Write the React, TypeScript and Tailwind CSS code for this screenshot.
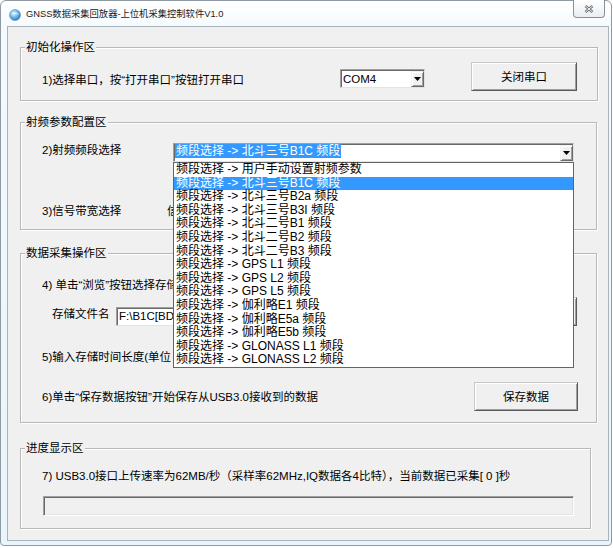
import React from "react";

const items = [
  "频段选择 -> 用户手动设置射频参数",
  "频段选择 -> 北斗三号B1C 频段",
  "频段选择 -> 北斗三号B2a 频段",
  "频段选择 -> 北斗三号B3I 频段",
  "频段选择 -> 北斗二号B1 频段",
  "频段选择 -> 北斗二号B2 频段",
  "频段选择 -> 北斗二号B3 频段",
  "频段选择 -> GPS L1 频段",
  "频段选择 -> GPS L2 频段",
  "频段选择 -> GPS L5 频段",
  "频段选择 -> 伽利略E1 频段",
  "频段选择 -> 伽利略E5a 频段",
  "频段选择 -> 伽利略E5b 频段",
  "频段选择 -> GLONASS L1 频段",
  "频段选择 -> GLONASS L2 频段",
];

function Arrow() {
  return (
    <svg width="7" height="4" viewBox="0 0 7 4">
      <path d="M0 0 H7 L3.5 4 Z" fill="#000" />
    </svg>
  );
}

function DropBtn() {
  return (
    <div className="w-[13px] h-full flex items-center justify-center bg-[#f0f0f0] border-t border-l border-t-[#f0f0f0] border-l-[#f0f0f0] border-r border-b border-r-[#6a6a6a] border-b-[#6a6a6a] shadow-[inset_1px_1px_0_#ffffff,inset_-1px_-1px_0_#a0a0a0]">
      <Arrow />
    </div>
  );
}

function Btn({ label, className }: { label?: string; className: string }) {
  return (
    <div
      className={
        "flex items-center justify-center bg-[#f0f0f0] border-t border-l border-t-[#c8c8c8] border-l-[#c8c8c8] border-r border-b border-r-[#5a5a5a] border-b-[#5a5a5a] shadow-[inset_1px_1px_0_#ffffff,inset_-1px_-1px_0_#a0a0a0] text-[11.5px] leading-[16px] " +
        className
      }
    >
      {label}
    </div>
  );
}

function Group({
  title,
  className,
  children,
}: {
  title: string;
  className: string;
  children: React.ReactNode;
}) {
  return (
    <div
      className={
        "relative ml-[12px] border border-[#b8b8b8] shadow-[inset_1px_1px_0_#ffffff,1px_1px_0_#ffffff] " +
        className
      }
    >
      <div className="absolute left-[4px] top-[-9px] px-[1px] bg-[#f0f0f0] text-[11.5px] leading-[16px]">
        {title}
      </div>
      {children}
    </div>
  );
}

const sunken =
  "border-t border-l border-t-[#a0a0a0] border-l-[#a0a0a0] border-b border-r border-b-[#e3e3e3] border-r-[#e3e3e3] shadow-[inset_1px_1px_0_#696969]";

export default function App() {
  return (
    <div className="w-[613px] h-[548px] bg-white overflow-hidden text-black text-[12px] leading-[16px] font-['Liberation_Sans','Noto_Sans_CJK_SC',sans-serif]">
      <div className="w-[612px] h-[546px] rounded-t-[6px] rounded-b-[4px] border border-[#8e99a3] bg-[linear-gradient(180deg,#ffffff_0%,#f4fafd_5%,#e8f5fa_100%)] flex flex-col">
        {/* title bar */}
        <div className="h-[25px] flex items-start">
          <div className="ml-[8px] mt-[8px] w-[12px] h-[12px]">
            <svg width="12" height="12" viewBox="0 0 12 12">
              <defs>
                <radialGradient id="g" cx="0.4" cy="0.35" r="0.7">
                  <stop offset="0" stopColor="#e8f6ff" />
                  <stop offset="0.45" stopColor="#7cc0ea" />
                  <stop offset="1" stopColor="#2a6fb8" />
                </radialGradient>
              </defs>
              <circle cx="6" cy="6" r="5.5" fill="url(#g)" stroke="#5a8fc4" strokeWidth="0.6" />
              <path d="M2.5 5 Q6 3.5 9.5 5" stroke="#ffffff" strokeWidth="0.8" fill="none" opacity="0.8" />
            </svg>
          </div>
          <div className="ml-[5px] mt-[6px] text-[9.3px] leading-[14px] text-[#1a1a1a] whitespace-nowrap">
            GNSS数据采集回放器-上位机采集控制软件V1.0
          </div>
          <div className="flex-1" />
          <div className="mt-[-1px] mr-[6px] w-[32px] h-[18px] rounded-b-[4px] border border-t-0 border-[#8a9098] bg-[linear-gradient(180deg,#ffffff,#e9eef2)] flex items-center justify-center">
            <svg width="10" height="8" viewBox="0 0 10 8">
              <path d="M1.5 1 L8.5 7 M8.5 1 L1.5 7" stroke="#6a6f75" strokeWidth="2.6" />
              <path d="M1.5 1 L8.5 7 M8.5 1 L1.5 7" stroke="#f4f4f4" strokeWidth="1" />
            </svg>
          </div>
        </div>

        {/* client */}
        <div className="ml-[6px] mr-[2px] mb-[4px] flex-1 bg-[#f0f0f0] border border-[#a9b3bc] flex flex-col">
          {/* G1 */}
          <Group title="初始化操作区" className="mt-[20px] w-[578px] h-[54px]">
            <div className="flex items-start pl-[21px]">
              <div className="w-[298px] mt-[24px] text-[11.5px] leading-[16px] whitespace-nowrap">
                1)选择串口，按“打开串口”按钮打开串口
              </div>
              <div className={"mt-[21px] w-[85px] h-[19px] bg-white flex items-stretch " + sunken}>
                <div className="flex-1 pl-[2px] pt-[1px] text-[11.5px] leading-[16px]">COM4</div>
                <div className="pt-[1px]">
                  <DropBtn />
                </div>
              </div>
              <Btn label="关闭串口" className="ml-[46px] mt-[14px] w-[106px] h-[29px]" />
            </div>
          </Group>

          {/* G2 */}
          <Group title="射频参数配置区" className="mt-[21px] w-[577px] h-[108px]">
            <div className="flex items-start pl-[21px]">
              <div className="w-[131px] mt-[19px] text-[11.5px] leading-[16px] whitespace-nowrap">
                2)射频频段选择
              </div>
              <div className={"relative mt-[20px] w-[401px] h-[19px] bg-white flex items-stretch " + sunken}>
                <div className="flex-1 flex items-start pl-[1px]">
                  <span className="h-[14px] px-[1px] bg-[#3399ff] text-white text-[12px] leading-[14px] whitespace-nowrap">
                    频段选择 -&gt; 北斗三号B1C 频段
                  </span>
                </div>
                <div className="pt-[1px]">
                  <DropBtn />
                </div>
                {/* dropdown list */}
                <div className="absolute z-20 left-[-1px] top-[18px] w-[401px] h-[206px] bg-white border border-[#646464]">
                  {items.map((t, i) => (
                    <div
                      key={i}
                      className={
                        "h-[13.6px] pl-[2px] text-[12px] leading-[13.6px] whitespace-nowrap " +
                        (i === 1 ? "bg-[#3399ff] text-white" : "text-black")
                      }
                    >
                      {t}
                    </div>
                  ))}
                </div>
              </div>
            </div>
            <div className="flex items-start pl-[21px] mt-[41px]">
              <div className="w-[125px] text-[11.5px] leading-[16px] whitespace-nowrap">3)信号带宽选择</div>
              <div className="w-[6px] overflow-hidden text-[11.5px] leading-[16px] whitespace-nowrap">信</div>
            </div>
          </Group>

          {/* G3 */}
          <Group title="数据采集操作区" className="mt-[23px] w-[577px] h-[170px]">
            <div className="ml-[21px] w-[131px] overflow-hidden mt-[23px] text-[11.5px] leading-[16px] whitespace-nowrap">
              4) 单击“浏览”按钮选择存储
            </div>
            <div className="flex items-start pl-[31px] mt-[4px]">
              <div className="w-[64px] mt-[9px] text-[11.5px] leading-[16px] whitespace-nowrap">存储文件名</div>
              <div className={"mt-[10px] w-[340px] h-[19px] bg-white pl-[2px] text-[11.5px] leading-[16px] " + sunken}>
                <div className="w-[55px] overflow-hidden whitespace-nowrap">F:\B1C[BD</div>
              </div>
              <Btn className="ml-[14px] w-[107px] h-[29px]" />
            </div>
            <div className="ml-[21px] w-[131px] overflow-hidden mt-[23px] text-[11.5px] leading-[16px] whitespace-nowrap">
              5)输入存储时间长度(单位
            </div>
            <div className="flex items-start pl-[21px] mt-[17px]">
              <div className="w-[432px] mt-[7px] text-[11.5px] leading-[16px] whitespace-nowrap">
                6)单击“保存数据按钮”开始保存从USB3.0接收到的数据
              </div>
              <Btn label="保存数据" className="w-[104px] h-[29px]" />
            </div>
          </Group>

          {/* G4 */}
          <Group title="进度显示区" className="mt-[25px] w-[571px] h-[81px]">
            <div className="pl-[21px] mt-[19px] text-[11.5px] leading-[16px] whitespace-nowrap">
              7) USB3.0接口上传速率为62MB/秒（采样率62MHz,IQ数据各4比特），当前数据已采集[ 0 ]秒
            </div>
            <div className="ml-[22px] mt-[12px] w-[531px] h-[20px] bg-[#f0f0f0] border-t border-l border-t-[#a0a0a0] border-l-[#a0a0a0] border-b border-r border-b-white border-r-white shadow-[inset_1px_1px_0_#696969,inset_-1px_-1px_0_#e3e3e3]" />
          </Group>
        </div>
      </div>
    </div>
  );
}
